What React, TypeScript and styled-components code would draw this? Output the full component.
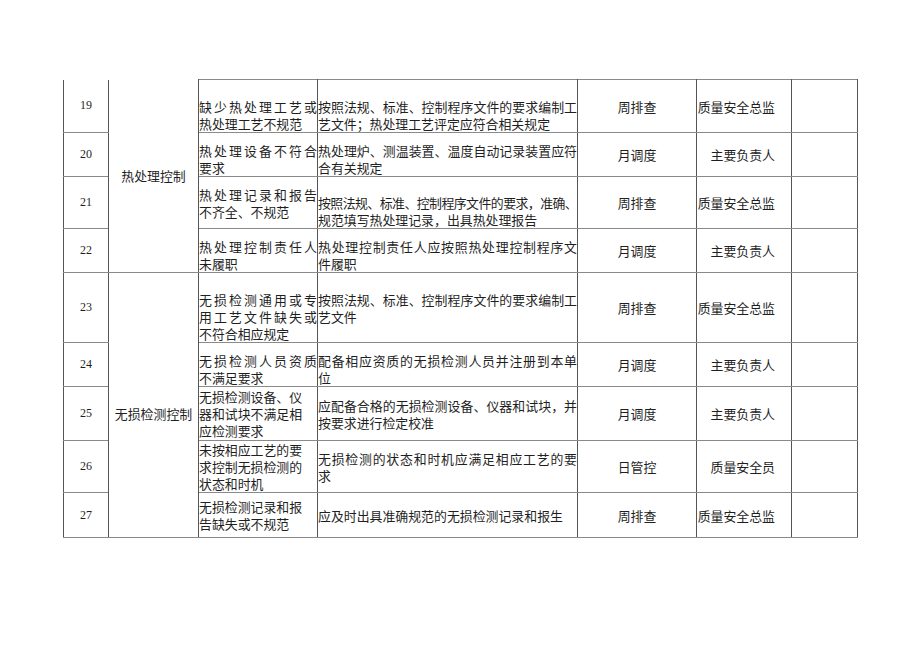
import React from 'react';
import styled, { createGlobalStyle, css } from 'styled-components';

const GlobalStyle = createGlobalStyle`
	html,
	body {
		margin: 0;
		padding: 0;
		background: #ffffff;
	}
	body {
		font-family: 'Noto Sans CJK SC', 'Noto Sans', sans-serif;
		color: #1f1f1f;
	}
`;

const Page = styled.div`
	width: 920px;
	height: 651px;
	box-sizing: border-box;
	padding: 79px 0 0 63px;
`;

const Sheet = styled.table`
	border-collapse: collapse;
	table-layout: fixed;
	width: 794px;
	font-size: 12.9px;
	line-height: 17px;
`;

const Col = styled.col<{ $width: number }>`
	width: ${(p) => p.$width}px;
`;

const Row = styled.tr<{ $height: number }>`
	height: ${(p) => p.$height}px;
`;

const cellBase = css<{ $open?: boolean }>`
	padding: 0;
	border-left: 1px solid #555555;
	border-right: 1px solid #555555;
	border-top: ${(p) => (p.$open ? 'none' : '1px solid #8a8a8a')};
	border-bottom: 1px solid #8a8a8a;
	vertical-align: middle;
`;

const NumCell = styled.td<{ $open?: boolean }>`
	${cellBase};
	text-align: center;
	font-family: 'Liberation Serif', 'Times New Roman', serif;
	font-size: 12px;
`;

const GroupCell = styled.td<{ $open?: boolean; $drop?: number }>`
	${cellBase};
	text-align: center;
	padding-top: ${(p) => p.$drop ?? 0}px;
`;

const TextCell = styled.td<{ $open?: boolean; $bottom?: boolean }>`
	${cellBase};
	text-align: left;
	vertical-align: ${(p) => (p.$bottom ? 'bottom' : 'middle')};
`;

const FreqCell = styled.td<{ $open?: boolean }>`
	${cellBase};
	text-align: center;
`;

const RoleCell = styled.td<{ $open?: boolean }>`
	${cellBase};
	text-align: right;
	padding-right: 16px;
`;

const BlankCell = styled.td<{ $open?: boolean }>`
	${cellBase};
`;

const Line = styled.span<{ $justify?: boolean; $tight?: boolean }>`
	display: block;
	white-space: nowrap;
	text-align: ${(p) => (p.$justify ? 'justify' : 'left')};
	text-align-last: ${(p) => (p.$justify ? 'justify' : 'auto')};
	letter-spacing: ${(p) => (p.$tight ? '-0.75px' : 'normal')};
`;

type Entry = {
	no: number;
	height: number;
	hazard: string[];
	hazardJustify: boolean;
	hazardBottom: boolean;
	measure: string[];
	measureBottom: boolean;
	tightFirst?: boolean;
	freq: string;
	role: string;
};

const columns = [45, 90, 119, 260, 119, 95, 66];

const groups = [
	{ label: '热处理控制', start: 19, span: 4, drop: 0 },
	{ label: '无损检测控制', start: 23, span: 5, drop: 16 },
];

const rows: Entry[] = [
	{
		no: 19,
		height: 53,
		hazard: ['缺少热处理工艺或', '热处理工艺不规范'],
		hazardJustify: true,
		hazardBottom: true,
		measure: ['按照法规、标准、控制程序文件的要求编制工', '艺文件；热处理工艺评定应符合相关规定'],
		measureBottom: true,
		freq: '周排查',
		role: '质量安全总监',
	},
	{
		no: 20,
		height: 44,
		hazard: ['热处理设备不符合', '要求'],
		hazardJustify: true,
		hazardBottom: true,
		measure: ['热处理炉、测温装置、温度自动记录装置应符', '合有关规定'],
		measureBottom: true,
		freq: '月调度',
		role: '主要负责人',
	},
	{
		no: 21,
		height: 52,
		hazard: ['热处理记录和报告', '不齐全、不规范'],
		hazardJustify: true,
		hazardBottom: false,
		measure: ['按照法规、标准、控制程序文件的要求，准确、', '规范填写热处理记录，出具热处理报告'],
		measureBottom: true,
		tightFirst: true,
		freq: '周排查',
		role: '质量安全总监',
	},
	{
		no: 22,
		height: 44,
		hazard: ['热处理控制责任人', '未履职'],
		hazardJustify: true,
		hazardBottom: true,
		measure: ['热处理控制责任人应按照热处理控制程序文', '件履职'],
		measureBottom: true,
		freq: '月调度',
		role: '主要负责人',
	},
	{
		no: 23,
		height: 70,
		hazard: ['无损检测通用或专', '用工艺文件缺失或', '不符合相应规定'],
		hazardJustify: true,
		hazardBottom: true,
		measure: ['按照法规、标准、控制程序文件的要求编制工', '艺文件'],
		measureBottom: false,
		freq: '周排查',
		role: '质量安全总监',
	},
	{
		no: 24,
		height: 44,
		hazard: ['无损检测人员资质', '不满足要求'],
		hazardJustify: true,
		hazardBottom: true,
		measure: ['配备相应资质的无损检测人员并注册到本单', '位'],
		measureBottom: true,
		freq: '月调度',
		role: '主要负责人',
	},
	{
		no: 25,
		height: 54,
		hazard: ['无损检测设备、仪', '器和试块不满足相', '应检测要求'],
		hazardJustify: false,
		hazardBottom: false,
		measure: ['应配备合格的无损检测设备、仪器和试块，并', '按要求进行检定校准'],
		measureBottom: false,
		freq: '月调度',
		role: '主要负责人',
	},
	{
		no: 26,
		height: 52,
		hazard: ['未按相应工艺的要', '求控制无损检测的', '状态和时机'],
		hazardJustify: false,
		hazardBottom: false,
		measure: ['无损检测的状态和时机应满足相应工艺的要', '求'],
		measureBottom: false,
		freq: '日管控',
		role: '质量安全员',
	},
	{
		no: 27,
		height: 45,
		hazard: ['无损检测记录和报', '告缺失或不规范'],
		hazardJustify: false,
		hazardBottom: false,
		measure: ['应及时出具准确规范的无损检测记录和报生'],
		measureBottom: false,
		freq: '周排查',
		role: '质量安全总监',
	},
];

// non-last lines are spread to the full cell width, like Word's justify
function Lines({ items, justify, tightFirst }: { items: string[]; justify: boolean; tightFirst?: boolean }) {
	return (
		<>
			{items.map((text, i) => (
				<Line key={i} $justify={justify && i < items.length - 1} $tight={tightFirst && i === 0}>
					{text}
				</Line>
			))}
		</>
	);
}

export default function App() {
	return (
		<>
			<GlobalStyle />
			<Page>
				<Sheet>
					<colgroup>
						{columns.map((w, i) => (
							<Col key={i} $width={w} />
						))}
					</colgroup>
					<tbody>
						{rows.map((row, index) => {
							const group = groups.find((g) => g.start === row.no);
							const first = index === 0;
							return (
								<Row key={row.no} $height={row.height}>
									<NumCell $open={first}>{row.no}</NumCell>
									{group && (
										<GroupCell rowSpan={group.span} $open={first} $drop={group.drop}>
											{group.label}
										</GroupCell>
									)}
									<TextCell $bottom={row.hazardBottom}>
										<Lines items={row.hazard} justify={row.hazardJustify} />
									</TextCell>
									<TextCell $bottom={row.measureBottom}>
										<Lines items={row.measure} justify={true} tightFirst={row.tightFirst} />
									</TextCell>
									<FreqCell>{row.freq}</FreqCell>
									<RoleCell>{row.role}</RoleCell>
									<BlankCell />
								</Row>
							);
						})}
					</tbody>
				</Sheet>
			</Page>
		</>
	);
}
